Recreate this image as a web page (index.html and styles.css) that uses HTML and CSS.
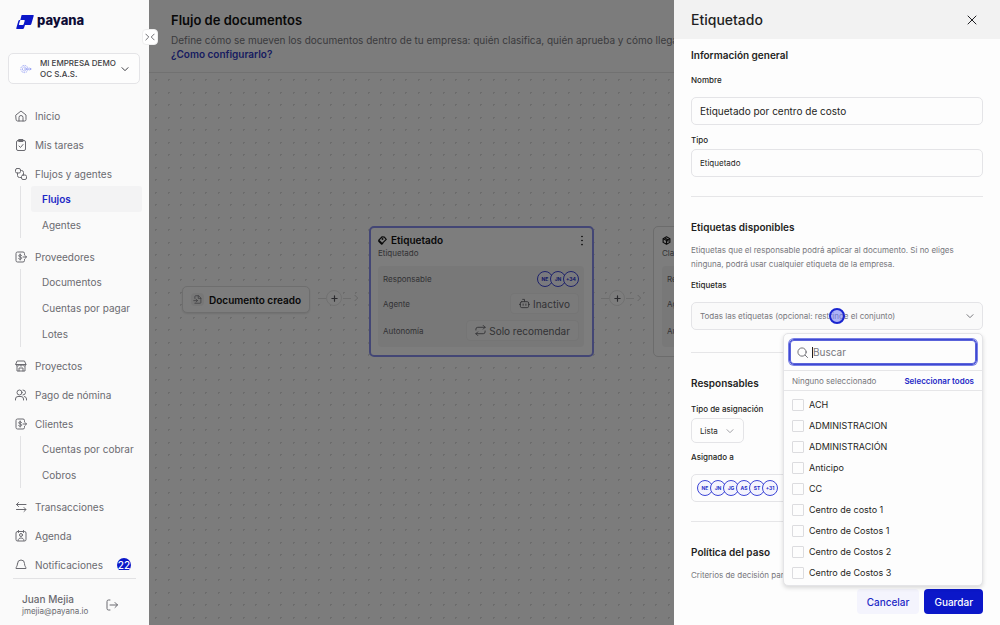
FILE: index.html
```html
<!DOCTYPE html>
<html lang="es">
<head>
    <meta charset="UTF-8">
    <meta name="viewport" content="width=device-width, initial-scale=1.0">
    <title>Payana - Flujo de documentos</title>
    <link rel="stylesheet" href="styles.css">
</head>
<body>
    <!-- Shared icons -->
    <svg class="sprite" aria-hidden="true">
        <symbol id="chevron" viewBox="0 0 24 24"><path d="M3 8l9 9 9-9"/></symbol>
        <symbol id="money" viewBox="0 0 24 24"><path d="M19 7V5a3 3 0 0 0-3-3H5a3 3 0 0 0-3 3v14a3 3 0 0 0 3 3h11a3 3 0 0 0 3-3v-2"/><path d="M13 9c-.5-1-1.500-1.500-2.800-1.500C8.500 7.500 7.500 8.400 7.500 9.700c0 3 5.800 1.500 5.800 4.500 0 1.400-1.200 2.300-3 2.300-1.500 0-2.700-.6-3.200-1.700M10.400 6v12M16 12h7M20 9l3 3-3 3"/></symbol>
        <symbol id="plus" viewBox="0 0 24 24"><path d="M12 3v18M3 12h18"/></symbol>
    </svg>

    <aside class="sidebar">
        <a class="logo" href="#">
            <svg class="logo-mark" viewBox="0 0 54 46"><path fill="#0b17c9" d="M18 2h33a2 2 0 0 1 2 3l-7 24a4 4 0 0 1-4 3H27l-3 9a4 4 0 0 1-4 3H3a2 2 0 0 1-2-3l6-21a4 4 0 0 1 4-3h2l3-12a3 3 0 0 1 2-3z"/><path fill="#fafafa" d="M14 17h10a2 2 0 0 1 2 3l-3 10a3 3 0 0 1-3 2H11a2 2 0 0 1-2-3l3-10a3 3 0 0 1 2-2z"/></svg>
            <span>payana</span>
        </a>
        <button class="company">
            <svg class="company-logo" viewBox="0 0 30 24"><circle cx="11" cy="12" r="9" stroke-dasharray="4 2"/><circle cx="11" cy="12" r="5" stroke-dasharray="4 1"/><path d="M10 12h18M24 9l4 3-4 3"/></svg>
            <span>MI EMPRESA DEMO OC S.A.S.</span>
            <svg class="icon icon-small"><use href="#chevron"/></svg>
        </button>

        <nav class="menu">
            <a class="menu-item" href="#">
                <svg class="icon" viewBox="0 0 24 24"><path d="M2 10l10-8 10 8v9a3 3 0 0 1-3 3H5a3 3 0 0 1-3-3z"/><path d="M8 22v-7a4 4 0 0 1 8 0v7"/></svg>
                Inicio
            </a>
            <a class="menu-item" href="#">
                <svg class="icon" viewBox="0 0 24 24"><rect x="3" y="3" width="18" height="20" rx="3"/><path d="M8 1h8v4H8zM8 14l3 3 5-6"/></svg>
                Mis tareas
            </a>
            <a class="menu-item" href="#">
                <svg class="icon" viewBox="0 0 24 24"><rect x="1" y="1" width="10" height="9" rx="3"/><rect x="13" y="14" width="10" height="9" rx="3"/><path d="M5 10v5a4 4 0 0 0 4 4h4M11 5h2a4 4 0 0 1 4 4v5"/></svg>
                Flujos y agentes
            </a>
            <div class="submenu">
                <a class="active" href="#">Flujos</a>
                <a href="#">Agentes</a>
            </div>
            <a class="menu-item" href="#">
                <svg class="icon"><use href="#money"/></svg>
                Proveedores
            </a>
            <div class="submenu">
                <a href="#">Documentos</a>
                <a href="#">Cuentas por pagar</a>
                <a href="#">Lotes</a>
            </div>
            <a class="menu-item" href="#">
                <svg class="icon" viewBox="0 0 24 24"><path d="M5 2h14l3 7H2zM2 9c0 4 6 4 6.700 0 .7 4 6 4 6.700 0 .7 4 6.600 4 6.600 0M4 12v10h16V12M8 22v-6h8v6"/></svg>
                Proyectos
            </a>
            <a class="menu-item" href="#">
                <svg class="icon" viewBox="0 0 24 24"><circle cx="9" cy="7" r="5"/><path d="M1 22v-2a5 5 0 0 1 5-5h6a5 5 0 0 1 5 5v2M16 2a5 5 0 0 1 0 10M19 15a5 5 0 0 1 4 5v2"/></svg>
                Pago de nómina
            </a>
            <a class="menu-item" href="#">
                <svg class="icon"><use href="#money"/></svg>
                Clientes
            </a>
            <div class="submenu">
                <a href="#">Cuentas por cobrar</a>
                <a href="#">Cobros</a>
            </div>
            <a class="menu-item" href="#">
                <svg class="icon" viewBox="0 0 24 24"><path d="M22 7H3M7 3L3 7l4 4M3 17h19M18 13l4 4-4 4"/></svg>
                Transacciones
            </a>
            <a class="menu-item" href="#">
                <svg class="icon" viewBox="0 0 24 24"><rect x="2" y="3" width="20" height="19" rx="3"/><circle cx="12" cy="10" r="3"/><path d="M6 21c0-7 12-7 12 0M7 1v4M17 1v4"/></svg>
                Agenda
            </a>
            <a class="menu-item" href="#">
                <svg class="icon" viewBox="0 0 24 24"><path d="M5 9a7 7 0 0 1 14 0c0 6 3 6 3 10H2c0-4 3-4 3-10"/></svg>
                Notificaciones
                <span class="badge">22</span>
            </a>
        </nav>

        <div class="user">
            <div>
                <div class="user-name">Juan Mejia</div>
                <div class="user-mail">jmejia@payana.io</div>
            </div>
            <button class="logout" aria-label="Cerrar sesión">
                <svg class="icon" viewBox="0 0 24 24"><path d="M8 2H5a3 3 0 0 0-3 3v14a3 3 0 0 0 3 3h3M8 12h15M18 7l5 5-5 5"/></svg>
            </button>
        </div>
    </aside>

    <main class="page">
        <header class="page-header">
            <h1>Flujo de documentos</h1>
            <p>Define cómo se mueven los documentos dentro de tu empresa: quién clasifica, quién aprueba y cómo llegan</p>
            <a href="#">¿Como configurarlo?</a>
        </header>

        <div class="canvas">
            <div class="start-node">
                <span class="start-icon"><svg class="icon" viewBox="0 0 24 24"><path d="M5 9V4a2 2 0 0 1 2-2h8l6 6v12a2 2 0 0 1-2 2H5M14 2v7h7M2 15h10M8 11l4 4-4 4"/></svg></span>
                Documento creado
            </div>

            <div class="connector connector-one">
                <button aria-label="Agregar paso"><svg class="icon"><use href="#plus"/></svg></button>
                <svg class="arrow" viewBox="0 0 24 24"><path d="M8 3l9 9-9 9"/></svg>
            </div>

            <section class="step step-tagging">
                <div class="step-title">
                    <svg class="icon" viewBox="0 0 24 24"><path d="M2 11l9-9 6 1 5 6-10 10-3-1zM2 11v3l8 8 3-3"/><circle cx="12" cy="8" r="1"/></svg>
                    <h2>Etiquetado</h2>
                    <button class="more" aria-label="Opciones"><svg viewBox="0 0 4 16"><circle cx="2" cy="3" r="1"/><circle cx="2" cy="8" r="1"/><circle cx="2" cy="13" r="1"/></svg></button>
                </div>
                <div class="step-kind">Etiquetado</div>
                <div class="step-body">
                    <div class="step-row">
                        <span>Responsable</span>
                        <span class="avatars"><i>NE</i><i>JN</i><i>+34</i></span>
                    </div>
                    <div class="step-row">
                        <span>Agente</span>
                        <button class="chip"><svg class="icon" viewBox="0 0 24 24"><rect x="3" y="8" width="18" height="13" rx="3"/><path d="M12 8V3H8M1 14h2M21 14h2M9 13v3M15 13v3"/></svg>Inactivo</button>
                    </div>
                    <div class="step-row">
                        <span>Autonomía</span>
                        <button class="chip"><svg class="icon" viewBox="0 0 24 24"><path d="M2 11V9a4 4 0 0 1 4-4h16M18 1l4 4-4 4M22 13v2a4 4 0 0 1-4 4H2M6 15l-4 4 4 4"/></svg>Solo recomendar</button>
                    </div>
                </div>
            </section>

            <div class="connector connector-two">
                <button aria-label="Agregar paso"><svg class="icon"><use href="#plus"/></svg></button>
                <svg class="arrow" viewBox="0 0 24 24"><path d="M8 3l9 9-9 9"/></svg>
            </div>

            <section class="step step-classify">
                <div class="step-title">
                    <svg class="icon" viewBox="0 0 24 24"><path d="M12 2l9 5v10l-9 5-9-5V7zM3 7l9 5 9-5M12 12v10M7 5l9 5v4"/></svg>
                    <h2>Clasificación</h2>
                </div>
                <div class="step-kind">Clasificación</div>
                <div class="step-body">
                    <div class="step-row"><span>Responsable</span></div>
                    <div class="step-row"><span>Agente</span></div>
                    <div class="step-row"><span>Autonomía</span></div>
                </div>
            </section>
        </div>
        <div class="overlay"></div>
    </main>

    <button class="collapse" aria-label="Contraer menú">
        <svg class="icon" viewBox="0 0 24 24"><path d="M2 5l7 7-7 7M22 5l-7 7 7 7"/></svg>
    </button>

    <aside class="drawer">
        <header class="drawer-header">
            <h2>Etiquetado</h2>
            <button aria-label="Cerrar"><svg class="icon" viewBox="0 0 24 24"><path d="M4 4l16 16M20 4L4 20"/></svg></button>
        </header>

        <form class="drawer-body">
            <section class="general">
                <h3>Información general</h3>
                <label class="name-label" for="nombre">Nombre</label>
                <input class="field" id="nombre" type="text" value="Etiquetado por centro de costo">
                <label class="type-label" for="tipo">Tipo</label>
                <input class="field field-small" id="tipo" type="text" value="Etiquetado" readonly>
            </section>

            <section>
                <h3>Etiquetas disponibles</h3>
                <p>Etiquetas que el responsable podrá aplicar al documento. Si no eliges ninguna, podrá usar cualquier etiqueta de la empresa.</p>
                <label class="tags-label" for="etiquetas">Etiquetas</label>
                <div class="tags-picker">
                    <button class="field tags-field" id="etiquetas" type="button" aria-haspopup="listbox">
                        <span>Todas las etiquetas (opcional: restringe el conjunto)</span>
                        <svg class="icon icon-small"><use href="#chevron"/></svg>
                    </button>
                    <span class="pointer"></span>
                    <div class="dropdown">
                        <div class="search-row">
                            <div class="search">
                                <svg class="icon" viewBox="0 0 24 24"><circle cx="11" cy="11" r="9"/><path d="M18 18l5 5"/></svg>
                                <span class="caret"></span>
                                <input type="text" placeholder="Buscar" aria-label="Buscar">
                            </div>
                        </div>
                        <div class="summary">
                            <span>Ninguno seleccionado</span>
                            <button type="button">Seleccionar todos</button>
                        </div>
                        <div class="options">
                            <label><input type="checkbox">ACH</label>
                            <label><input type="checkbox">ADMINISTRACION</label>
                            <label><input type="checkbox">ADMINISTRACIÓN</label>
                            <label><input type="checkbox">Anticipo</label>
                            <label><input type="checkbox">CC</label>
                            <label><input type="checkbox">Centro de costo 1</label>
                            <label><input type="checkbox">Centro de Costos 1</label>
                            <label><input type="checkbox">Centro de Costos 2</label>
                            <label><input type="checkbox">Centro de Costos 3</label>
                        </div>
                    </div>
                </div>
            </section>

            <section class="responsible">
                <h3>Responsables</h3>
                <label class="assign-label" for="asignacion">Tipo de asignación</label>
                <div class="select">
                    <select id="asignacion"><option>Lista</option></select>
                    <svg class="icon icon-small"><use href="#chevron"/></svg>
                </div>
                <label class="people-label" for="asignado">Asignado a</label>
                <button class="field people" id="asignado" type="button">
                    <span class="avatars"><i>NE</i><i>JN</i><i>JG</i><i>AS</i><i>ST</i><i>+31</i></span>
                </button>
            </section>

            <section>
                <h3>Política del paso</h3>
                <p>Criterios de decisión para</p>
            </section>
        </form>

        <footer class="drawer-footer">
            <button class="cancel">Cancelar</button>
            <button class="save">Guardar</button>
        </footer>
    </aside>
</body>
</html>
```
FILE: styles.css
```css
* {
    box-sizing: border-box;
}

body {
    margin: 0;
    height: 100vh;
    display: flex;
    overflow: hidden;
    font-family: 'Inter', sans-serif;
    font-size: 10px;
    line-height: 14px;
    color: #1f1f23;
    background: #fafafa;
}

button, input, select {
    font: inherit;
    color: inherit;
    margin: 0;
}

button {
    cursor: pointer;
    border: 0;
    padding: 0;
    background: none;
}

a {
    color: inherit;
    text-decoration: none;
}

h1, h2, h3, p {
    margin: 0;
}

.sprite {
    position: absolute;
    width: 0;
    height: 0;
}

.icon {
    width: 12px;
    height: 12px;
    flex: none;
    fill: none;
    stroke: currentColor;
    stroke-width: 2;
    stroke-linecap: round;
    stroke-linejoin: round;
}

.icon-small {
    width: 8px;
    height: 8px;
    stroke-width: 3;
}

/* Sidebar */
.sidebar {
    width: 149px;
    flex: none;
    display: flex;
    flex-direction: column;
    background: #fafafa;
    color: #6a6a70;
}

.logo {
    display: flex;
    align-items: center;
    gap: 3px;
    height: 28px;
    margin: 8px 0 17px 16px;
    font-size: 13px;
    font-weight: 800;
    color: #0d0b35;
}

.logo span {
    line-height: 18px;
    padding-bottom: 4px;
}

.logo-mark {
    width: 18px;
    height: 16px;
}

.company {
    display: flex;
    align-items: center;
    margin: 0 9px 0 8px;
    height: 31px;
    padding: 0 10px 0 11px;
    border: 1px solid #e4e4e7;
    border-radius: 5px;
    background: #fdfdfd;
    font-size: 8px;
    font-weight: 500;
    line-height: 11px;
    text-align: left;
    color: #3c3c42;
}

.company span {
    flex: 1;
    margin-left: 8px;
}

.company-logo {
    width: 12px;
    height: 10px;
    flex: none;
    fill: none;
    stroke: #8f9af3;
    stroke-width: 2;
}

.menu {
    flex: 1;
    min-height: 0;
    overflow: hidden;
    margin: 20px 7px 8px 15px;
}

.menu-item {
    display: flex;
    align-items: center;
    gap: 8px;
    height: 24px;
    margin-bottom: 5px;
}

.menu-item:has(+ .submenu) {
    margin-bottom: 0;
}

.submenu {
    display: flex;
    flex-direction: column;
    margin: 0 0 7px 5px;
    padding-left: 10px;
    border-left: 1px solid #e2e2e4;
}

.submenu a {
    height: 26px;
    line-height: 26px;
    padding-left: 11px;
    border-radius: 3px;
}

.submenu .active {
    background: #f3f3f4;
    color: #1c28c6;
    font-weight: 600;
}

.badge {
    margin: 0 11px 0 auto;
    width: 14px;
    height: 14px;
    border-radius: 50%;
    background: #0b17c9;
    color: #ffffff;
    text-align: center;
    font-weight: 500;
}

.user {
    display: flex;
    align-items: center;
    gap: 18px;
    height: 47px;
    margin: 0 13px;
    padding: 5px 0 0 9px;
    border-top: 1px solid #e2e2e4;
}

.user-name {
    font-weight: 500;
    line-height: 13px;
}

.user-mail {
    font-size: 8px;
    line-height: 11px;
}

.logout {
    display: flex;
}

.collapse {
    position: absolute;
    left: 142px;
    top: 29px;
    width: 16px;
    height: 16px;
    border-radius: 4px;
    border: 1px solid #eeeeee;
    background: #ffffff;
    color: #55555a;
    display: flex;
    align-items: center;
    justify-content: center;
}

.collapse .icon {
    width: 10px;
    height: 10px;
}

/* Page behind the drawer */
.page {
    flex: 1;
    min-width: 0;
    position: relative;
    display: flex;
    flex-direction: column;
    background: #f9f9f9;
}

.page-header {
    height: 73px;
    padding: 12px 22px;
    border-bottom: 1px solid #e2e2e2;
    white-space: nowrap;
    overflow: hidden;
}

.page-header h1 {
    font-size: 13px;
    font-weight: 600;
    line-height: 17px;
    margin-bottom: 4px;
    color: #111111;
}

.page-header p {
    color: #77777c;
}

.page-header a {
    color: #3038c0;
    font-weight: 600;
}

.canvas {
    flex: 1;
    position: relative;
    overflow: hidden;
    background-image:
        radial-gradient(circle, #d8d8d8 1px, transparent 1px),
        radial-gradient(circle, #d8d8d8 1px, transparent 1px),
        radial-gradient(circle, #d8d8d8 1px, transparent 1px),
        radial-gradient(circle, #d8d8d8 1px, transparent 1px);
    background-size: 25px 25px;
    background-position: 19px 19px, 7px 19px, 19px 7px, 7px 7px;
}

.overlay {
    position: absolute;
    inset: 0;
    background: rgba(0, 0, 0, 0.5);
}

.start-node {
    position: absolute;
    left: 33px;
    top: 213px;
    height: 27px;
    display: flex;
    align-items: center;
    gap: 5px;
    padding: 0 8px;
    border: 1px solid #dddddd;
    border-radius: 5px;
    background: #fafafa;
    box-shadow: 0 1px 2px rgba(0, 0, 0, 0.1);
    font-weight: 600;
    color: #111111;
}

.start-icon {
    display: flex;
    padding: 2px;
    border-radius: 4px;
    background: #efefef;
    color: #77777c;
}

.start-icon .icon {
    width: 9px;
    height: 9px;
}

.connector {
    position: absolute;
    top: 217px;
    display: flex;
    align-items: center;
}

.connector::before {
    content: "";
    width: 8px;
    height: 1px;
    background: #dadada;
}

.connector button::after {
    content: "";
    position: absolute;
    left: 25px;
    width: 8px;
    height: 1px;
    background: #dadada;
}

.connector-one {
    left: 169px;
}

.connector-two {
    left: 452px;
}

.connector button {
    width: 16px;
    height: 16px;
    display: flex;
    align-items: center;
    justify-content: center;
    border: 1px solid #e2e2e2;
    border-radius: 50%;
    background: #fafafa;
    color: #55555a;
}

.connector button .icon {
    width: 7px;
    height: 7px;
    stroke-width: 4;
}

.arrow {
    width: 8px;
    height: 8px;
    margin-left: 10px;
    fill: none;
    stroke: #cccccc;
    stroke-width: 3;
}

.step {
    position: absolute;
    top: 153px;
    width: 225px;
    height: 131px;
    padding: 6px 8px;
    border: 1px solid #d8d8d8;
    border-radius: 5px;
    background: #fafafa;
}

.step-tagging {
    left: 220px;
    padding: 5px 8px 5px 7px;
    border: 2px solid #868dea;
}

.step-classify {
    left: 504px;
}

.step-title {
    display: flex;
    align-items: center;
    gap: 4px;
    color: #111111;
}

.step-title .icon {
    width: 9px;
    height: 9px;
    stroke-width: 3;
}

.step-title h2 {
    font-size: 10px;
    font-weight: 600;
}

.more {
    margin-left: auto;
    display: flex;
}

.more svg {
    width: 4px;
    height: 13px;
}

.step-kind {
    font-size: 8px;
    line-height: 12px;
    color: #66666b;
}

.step-body {
    margin-top: 7px;
    height: 81px;
    padding: 0 5px;
    border-radius: 4px;
    background: #f1f1f1;
}

.step-row {
    display: flex;
    align-items: center;
    justify-content: space-between;
    height: 25px;
    font-size: 8px;
    color: #66666b;
}

.step-row:last-child {
    height: 29px;
}

.chip {
    display: flex;
    align-items: center;
    gap: 3px;
    height: 21px;
    padding: 0 8px;
    border: 1px solid #eaeaea;
    border-radius: 4px;
    background: #f5f5f5;
    font-size: 10px;
    color: #66666b;
}

.chip .icon {
    width: 11px;
    height: 11px;
}

.avatars {
    display: flex;
}

.avatars i {
    width: 16px;
    height: 16px;
    margin-right: -3px;
    border: 1px solid #3c45d6;
    border-radius: 50%;
    background: #f4f4fd;
    color: #2630c8;
    font-size: 5px;
    font-style: normal;
    font-weight: 700;
    line-height: 14px;
    text-align: center;
}

.avatars i:last-child {
    margin-right: 0;
}

/* Drawer */
.drawer {
    position: fixed;
    top: 0;
    right: 0;
    bottom: 0;
    width: 326px;
    display: flex;
    flex-direction: column;
    background: #fdfdfd;
}

.drawer-header {
    display: flex;
    align-items: center;
    justify-content: space-between;
    height: 39px;
    padding: 0 22px 0 17px;
    background: #f2f2f2;
}

.drawer-header h2 {
    font-size: 14px;
    font-weight: 500;
    line-height: 18px;
}

.drawer-header button {
    display: flex;
}

.drawer-body {
    flex: 1;
    min-height: 0;
    padding: 0 17px;
}

.drawer-body section + section {
    margin-top: 19px;
    padding-top: 23px;
    border-top: 1px solid #e6e6e8;
}

.drawer-body .responsible {
    margin-top: 22px;
}

.general {
    padding-top: 9px;
}

h3 {
    font-size: 10px;
    font-weight: 600;
    line-height: 14px;
}

.drawer-body p {
    margin-top: 9px;
    font-size: 8px;
    color: #77777c;
}

.name-label, .type-label, .tags-label, .assign-label, .people-label {
    display: block;
    font-size: 8px;
    font-weight: 500;
    line-height: 12px;
}

.name-label {
    margin: 12px 0 11px;
}

.type-label {
    margin: 9px 0 3px;
}

.tags-label {
    margin: 8px 0 11px;
}

.assign-label {
    margin: 13px 0 3px;
}

.people-label {
    margin: 8px 0 11px;
}

.field {
    display: flex;
    align-items: center;
    width: 100%;
    height: 28px;
    padding: 0 8px;
    border: 1px solid #e4e4e7;
    border-radius: 5px;
    background: #fdfdfd;
}

.field-small {
    font-size: 8px;
}

.tags-picker {
    position: relative;
}

.tags-field {
    justify-content: space-between;
    background: #fafafa;
    color: #77777c;
    font-size: 8px;
}

.select {
    position: relative;
    width: 53px;
}

.select select {
    appearance: none;
    display: block;
    width: 100%;
    height: 25px;
    padding: 0 8px;
    border: 1px solid #e4e4e7;
    border-radius: 5px;
    background: #fdfdfd;
    font-size: 8px;
}

.select .icon {
    position: absolute;
    right: 10px;
    top: 9px;
    color: #a0a0a5;
    pointer-events: none;
}

.people {
    padding: 0 5px;
}

.pointer {
    position: absolute;
    left: 138px;
    top: 6px;
    width: 16px;
    height: 16px;
    border: 2px solid #1a25d0;
    border-radius: 50%;
    background: rgba(120, 130, 245, 0.6);
}

/* Tag list */
.dropdown {
    position: absolute;
    z-index: 2;
    top: 31px;
    right: 0;
    width: 200px;
    border: 1px solid #e4e4e7;
    border-radius: 5px;
    background: #fdfdfd;
    box-shadow: 0 2px 4px rgba(0, 0, 0, 0.15);
}

.search-row {
    padding: 5px;
    border-bottom: 1px solid #e6e6e8;
}

.search {
    display: flex;
    align-items: center;
    height: 26px;
    padding: 0 7px;
    border: 1px solid #3f49d2;
    border-radius: 5px;
    box-shadow: 0 0 0 1px #7980e6, inset 0 0 0 1px #5a63da;
}

.search .icon {
    width: 11px;
    height: 11px;
    color: #66666b;
}

.search input {
    flex: 1;
    min-width: 0;
    border: 0;
    padding: 0;
    outline: 0;
    background: none;
}

.search input::placeholder {
    color: #77777c;
}

.caret {
    width: 1px;
    height: 11px;
    margin-left: 4px;
    background: #1f1f23;
}

.summary {
    display: flex;
    align-items: center;
    justify-content: space-between;
    height: 20px;
    padding: 0 8px;
    border-bottom: 1px solid #e6e6e8;
    font-size: 8px;
    color: #77777c;
}

.summary button {
    color: #1c28c6;
    font-weight: 600;
}

.options {
    padding: 3px 8px 2px;
}

.options label {
    display: flex;
    align-items: center;
    gap: 5px;
    height: 21px;
    font-size: 9px;
}

.options input {
    appearance: none;
    width: 12px;
    height: 12px;
    border: 1px solid #dcdcdf;
    border-radius: 1px;
}

.drawer-footer {
    display: flex;
    justify-content: flex-end;
    gap: 5px;
    padding: 3px 17px 11px;
    background: #fdfdfd;
}

.drawer-footer button {
    height: 25px;
    padding: 0 10px;
    border-radius: 4px;
    font-weight: 500;
}

.cancel {
    background: #f4f4fd;
    color: #1c28c6;
}

.save {
    background: #0b17c9;
    color: #ffffff;
}
```
